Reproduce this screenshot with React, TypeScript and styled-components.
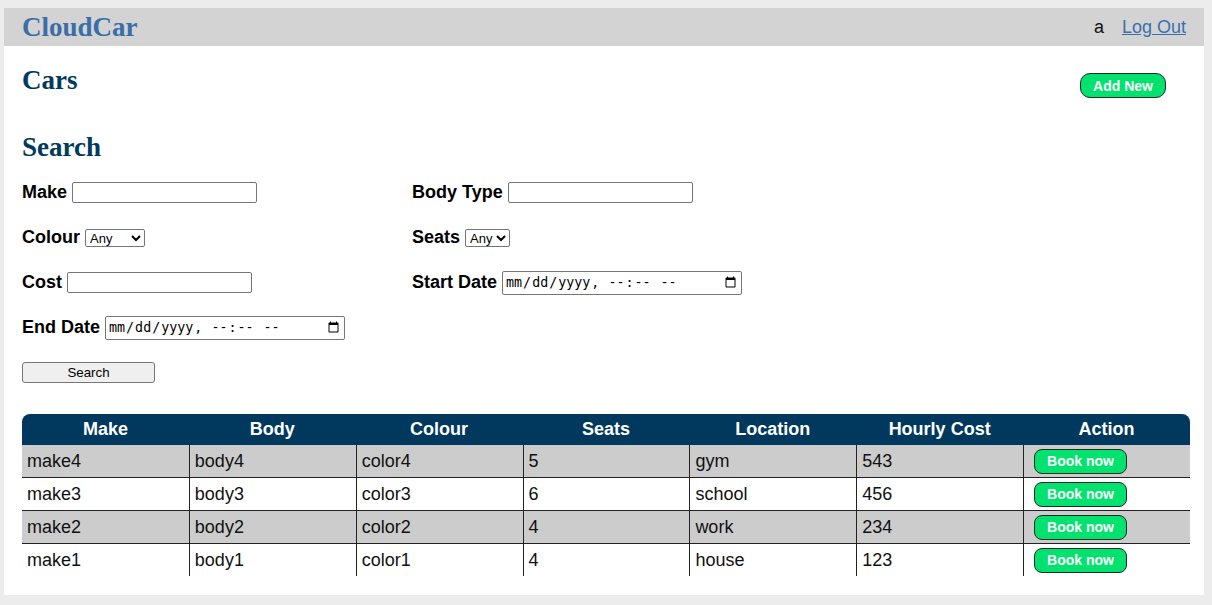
import React from "react";
import styled, { createGlobalStyle } from "styled-components";

const GlobalStyle = createGlobalStyle`
  html, body {
    margin: 0;
    background: #ececec;
  }
  body {
    padding: 8px 8px 10px 4px;
    font-family: "Liberation Sans", Arial, sans-serif;
  }
`;

const Page = styled.div`
  width: 1200px;
  background: #ffffff;
`;

const Header = styled.header`
  height: 38px;
  background: #d3d3d3;
  display: flex;
  align-items: center;
  justify-content: space-between;
  padding: 0 18px;
`;

const Brand = styled.div`
  font-family: "Liberation Serif", "Times New Roman", serif;
  font-weight: bold;
  font-size: 27px;
  color: #3a6ea6;
`;

const UserBox = styled.div`
  display: flex;
  align-items: center;
  gap: 18px;
  font-size: 18px;
  color: #111;
`;

const Link = styled.a`
  color: #3a70b0;
  text-decoration: underline;
  cursor: pointer;
`;

const Main = styled.main`
  padding: 0 14px 19px 18px;
`;

const TitleRow = styled.div`
  display: flex;
  justify-content: space-between;
  align-items: flex-start;
  margin-top: 19px;
`;

const Heading = styled.h2<{ $top?: number }>`
  margin: ${(p) => p.$top ?? 0}px 0 0 0;
  font-family: "Liberation Serif", "Times New Roman", serif;
  font-weight: bold;
  font-size: 27px;
  line-height: 30px;
  color: #003a5c;
`;

const GreenButton = styled.button<{ $w: number; $h: number; $r: number }>`
  width: ${(p) => p.$w}px;
  height: ${(p) => p.$h}px;
  border-radius: ${(p) => p.$r}px;
  background: #02e26e;
  border: 1px solid #1d2b23;
  color: #ffffff;
  font-family: "Liberation Sans", Arial, sans-serif;
  font-weight: bold;
  font-size: 14px;
  padding: 0;
  cursor: pointer;
`;

const AddNew = styled(GreenButton)`
  margin: 8px 24px 0 0;
`;

const Form = styled.form`
  margin-top: 8px;
`;

const FieldGrid = styled.div`
  display: grid;
  grid-template-columns: 390px 390px;
  grid-auto-rows: 45px;
`;

const Field = styled.div`
  display: flex;
  align-items: center;
  gap: 5px;
`;

const Label = styled.label`
  font-weight: bold;
  font-size: 18px;
  color: #000;
`;

const TextInput = styled.input`
  box-sizing: border-box;
  width: 185px;
  height: 21px;
  border: 1px solid #767676;
  border-radius: 2px;
  padding: 1px 2px;
  font-size: 13.33px;
`;

const Select = styled.select<{ $w: number }>`
  box-sizing: border-box;
  width: ${(p) => p.$w}px;
  height: 18px;
  border: 1px solid #767676;
  border-radius: 2px;
  font-family: "Liberation Sans", Arial, sans-serif;
  font-size: 13px;
  padding: 0;
  background: #fff;
  color: #000;
`;

const DateInput = styled.input`
  box-sizing: border-box;
  width: 240px;
  height: 24px;
  border: 1px solid #767676;
  border-radius: 2px;
  padding: 1px 2px;
  font-family: "DejaVu Sans Mono", monospace;
  font-size: 13.33px;
`;

const SearchButton = styled.button`
  margin-top: 12px;
  width: 133px;
  height: 21px;
  background: #efefef;
  border: 1px solid #767676;
  border-radius: 3px;
  font-family: "Liberation Sans", Arial, sans-serif;
  font-size: 13.33px;
  color: #000;
  padding: 0;
`;

const Table = styled.table`
  margin-top: 31px;
  width: 1168px;
  border-collapse: separate;
  border-spacing: 0;
  table-layout: fixed;
`;

const HeadCell = styled.th<{ $first?: boolean; $last?: boolean }>`
  background: #00395d;
  color: #fff;
  font-weight: bold;
  font-size: 18px;
  height: 31px;
  padding: 0;
  text-align: center;
  border-top-left-radius: ${(p) => (p.$first ? 8 : 0)}px;
  border-top-right-radius: ${(p) => (p.$last ? 8 : 0)}px;
`;

const Row = styled.tr<{ $alt: boolean }>`
  background: ${(p) => (p.$alt ? "#cccccc" : "#ffffff")};
`;

const Cell = styled.td<{ $first?: boolean; $top?: boolean }>`
  height: 32px;
  padding: 0 0 0 5px;
  font-size: 18px;
  color: #111;
  border-left: ${(p) => (p.$first ? "none" : "1px solid #222")};
  border-top: ${(p) => (p.$top ? "1px solid #222" : "none")};
  vertical-align: middle;
`;

const ActionCell = styled(Cell)`
  padding-left: 10px;
`;

const cars = [
  { make: "make4", body: "body4", colour: "color4", seats: 5, location: "gym", cost: 543 },
  { make: "make3", body: "body3", colour: "color3", seats: 6, location: "school", cost: 456 },
  { make: "make2", body: "body2", colour: "color2", seats: 4, location: "work", cost: 234 },
  { make: "make1", body: "body1", colour: "color1", seats: 4, location: "house", cost: 123 },
];

const headers = ["Make", "Body", "Colour", "Seats", "Location", "Hourly Cost", "Action"];

export default function App() {
  return (
    <>
      <GlobalStyle />
      <Page>
        <Header>
          <Brand>CloudCar</Brand>
          <UserBox>
            <span>a</span>
            <Link>Log Out</Link>
          </UserBox>
        </Header>
        <Main>
          <TitleRow>
            <Heading>Cars</Heading>
            <AddNew $w={86} $h={25} $r={10}>Add New</AddNew>
          </TitleRow>
          <Heading $top={34}>Search</Heading>
          <Form onSubmit={(e) => e.preventDefault()}>
            <FieldGrid>
              <Field>
                <Label>Make</Label>
                <TextInput type="text" />
              </Field>
              <Field>
                <Label>Body Type</Label>
                <TextInput type="text" />
              </Field>
              <Field>
                <Label>Colour</Label>
                <Select $w={60} defaultValue="any">
                  <option value="any">Any</option>
                  <option value="red">Red</option>
                  <option value="black">Black</option>
                </Select>
              </Field>
              <Field>
                <Label>Seats</Label>
                <Select $w={45} defaultValue="any">
                  <option value="any">Any</option>
                  <option value="4">4</option>
                </Select>
              </Field>
              <Field>
                <Label>Cost</Label>
                <TextInput type="text" />
              </Field>
              <Field>
                <Label>Start Date</Label>
                <DateInput type="datetime-local" />
              </Field>
              <Field>
                <Label>End Date</Label>
                <DateInput type="datetime-local" />
              </Field>
            </FieldGrid>
            <SearchButton type="submit">Search</SearchButton>
          </Form>
          <Table>
            <thead>
              <tr>
                {headers.map((h, i) => (
                  <HeadCell key={h} $first={i === 0} $last={i === headers.length - 1}>
                    {h}
                  </HeadCell>
                ))}
              </tr>
            </thead>
            <tbody>
              {cars.map((c, i) => (
                <Row key={c.make} $alt={i % 2 === 0}>
                  <Cell $first $top={i > 0}>{c.make}</Cell>
                  <Cell $top={i > 0}>{c.body}</Cell>
                  <Cell $top={i > 0}>{c.colour}</Cell>
                  <Cell $top={i > 0}>{c.seats}</Cell>
                  <Cell $top={i > 0}>{c.location}</Cell>
                  <Cell $top={i > 0}>{c.cost}</Cell>
                  <ActionCell $top={i > 0}>
                    <GreenButton $w={93} $h={25} $r={8}>Book now</GreenButton>
                  </ActionCell>
                </Row>
              ))}
            </tbody>
          </Table>
        </Main>
      </Page>
    </>
  );
}
